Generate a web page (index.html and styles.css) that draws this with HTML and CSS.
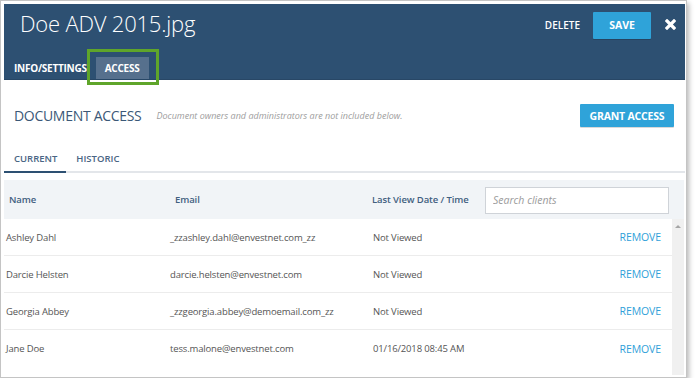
FILE: index.html
```html
<!DOCTYPE html>
<html lang="en">
<head>
<meta charset="utf-8">
<title>Doe ADV 2015.jpg</title>
<link rel="stylesheet" href="styles.css">
</head>
<body>
<div class="frame">
  <div class="modal">
    <header class="hdr">
      <div class="hdr-top">
        <h1 class="title">Doe ADV 2015.jpg</h1>
        <div class="actions">
          <span class="delete">DELETE</span>
          <button class="btn save">SAVE</button>
          <svg class="close" width="11" height="11" viewBox="0 0 11 11" aria-label="Close">
            <path d="M2 2 L9 9 M9 2 L2 9" stroke="#fff" stroke-width="3.2" stroke-linecap="square" fill="none"/>
          </svg>
        </div>
      </div>
      <nav class="hdr-tabs">
        <span class="htab">INFO/SETTINGS</span>
        <span class="htab active">ACCESS<span class="callout"></span></span>
      </nav>
    </header>

    <section class="access">
      <div class="access-head">
        <h2 class="sec-title">DOCUMENT ACCESS</h2>
        <span class="note">Document owners and administrators are not included below.</span>
        <button class="btn grant">GRANT ACCESS</button>
      </div>

      <div class="subtabs">
        <span class="stab current">CURRENT</span>
        <span class="stab">HISTORIC</span>
      </div>

      <div class="table">
        <div class="thead">
          <span class="th th-name">Name</span>
          <span class="th th-email">Email</span>
          <span class="th th-date">Last View Date / Time</span>
          <input class="search" type="text" placeholder="Search clients">
        </div>
        <div class="tbody-wrap">
          <div class="rows">
            <div class="row"><span>Ashley Dahl</span><span>_zzashley.dahl@envestnet.com_zz</span><span>Not Viewed</span><a class="remove">REMOVE</a></div>
            <div class="row"><span>Darcie Helsten</span><span>darcie.helsten@envestnet.com</span><span>Not Viewed</span><a class="remove">REMOVE</a></div>
            <div class="row"><span>Georgia Abbey</span><span>_zzgeorgia.abbey@demoemail.com_zz</span><span>Not Viewed</span><a class="remove">REMOVE</a></div>
            <div class="row"><span>Jane Doe</span><span>tess.malone@envestnet.com</span><span>01/16/2018 08:45 AM</span><a class="remove">REMOVE</a></div>
          </div>
          <div class="scrollbar"><span class="arrow"></span></div>
        </div>
      </div>
    </section>
  </div>
</div>
</body>
</html>
```

FILE: styles.css
```css
* { box-sizing: border-box; }

html, body {
  margin: 0;
  padding: 0;
  background: #ffffff;
}

body {
  font-family: "Open Sans", "Noto Sans", "Liberation Sans", sans-serif;
  color: #555;
}

.frame {
  width: 687px;
  height: 378px;
  border: 1px solid #c4c4c4;
  padding: 3px 1px 0 3px;
  box-shadow: 2px 3px 5px rgba(0, 0, 0, 0.28);
  background: #fff;
}

.modal {
  height: 100%;
  display: flex;
  flex-direction: column;
  overflow: hidden;
}

/* ---------- header ---------- */
.hdr {
  height: 76px;
  background: #2d5072;
  display: flex;
  flex-direction: column;
  justify-content: space-between;
  border-bottom: 1px solid #284766;
}

.hdr-top {
  height: 37px;
  display: flex;
  align-items: center;
  justify-content: space-between;
  padding: 5px 9px 0 16px;
}

.title {
  margin: 0;
  font-weight: 300;
  font-size: 22px;
  color: #fff;
  letter-spacing: -0.2px;
  line-height: 26px;
  margin-top: -4px;
}

.actions {
  display: flex;
  align-items: center;
}

.delete {
  color: #fff;
  font-size: 10px;
  font-weight: 600;
  margin-right: 13px;
}

.btn {
  border: 0;
  font-family: inherit;
  color: #fff;
  font-weight: 700;
  background: #2fa3d9;
  border-radius: 1px;
  padding: 0;
  box-shadow: 0 1px 0 rgba(0, 0, 0, 0.15);
}

.save {
  width: 58px;
  height: 27px;
  font-size: 10.5px;
  margin-right: 14px;
}

.close {
  display: block;
  margin-top: -2px;
}

.hdr-tabs {
  display: flex;
  padding-left: 1px;
  height: 22px;
}

.htab {
  position: relative;
  color: #fff;
  font-size: 10px;
  font-weight: 700;
  line-height: 22px;
  padding: 0 9px;
  letter-spacing: -0.25px;
}

.htab.active {
  background: #56708d;
  padding: 0 10px 0 9px;
}

.callout {
  position: absolute;
  left: -9px;
  top: -8px;
  width: 72px;
  height: 36px;
  border: 3px solid #5fa52a;
}

/* ---------- access section ---------- */
.access {
  flex: 1;
  display: flex;
  flex-direction: column;
  padding-top: 24px;
}

.access-head {
  display: flex;
  align-items: center;
  height: 23px;
  padding: 0 11px 0 10px;
}

.sec-title {
  margin: 0;
  font-size: 14px;
  font-weight: 400;
  color: #3b5877;
  letter-spacing: -0.3px;
}

.note {
  margin-left: 15px;
  font-size: 9px;
  font-style: italic;
  color: #9d9d9d;
}

.grant {
  margin-left: auto;
  width: 94px;
  height: 23px;
  font-size: 10.5px;
  letter-spacing: -0.2px;
}

.subtabs {
  display: flex;
  margin-top: 20px;
  height: 26px;
  border-bottom: 2px solid #e3e6ea;
}

.stab {
  font-size: 9.5px;
  font-weight: 600;
  color: #4a6584;
  line-height: 24px;
  padding: 0 9px 0 10px;
}

.stab.current {
  border-bottom: 2px solid #2d5072;
  margin-bottom: -2px;
  height: 26px;
}

/* ---------- table ---------- */
.table {
  margin-top: 7px;
  flex: 1;
  display: flex;
  flex-direction: column;
}

.thead {
  height: 39px;
  background: #f1f4f7;
  display: grid;
  grid-template-columns: 166px 197px 113px 184px;
  align-items: center;
  padding-left: 5px;
  margin-right: 1px;
}

.th {
  font-size: 9.5px;
  font-weight: 600;
  color: #41607f;
  letter-spacing: -0.1px;
}

.search {
  height: 27px;
  width: 184px;
  border: 1px solid #cfd3d8;
  background: #fff;
  font-family: inherit;
  font-size: 10.5px;
  font-style: italic;
  padding: 0 7px;
  margin-top: 1px;
}

.search::placeholder {
  color: #9b9b9b;
}

.tbody-wrap {
  flex: 1;
  display: flex;
}

.rows {
  flex: 1;
}

.row {
  height: 37px;
  display: grid;
  grid-template-columns: 164px 203px 1fr auto;
  align-items: center;
  padding: 0 11px 0 2px;
  border-bottom: 1px solid #ececec;
  font-size: 9.5px;
  letter-spacing: -0.15px;
  color: #555;
}

.row:last-child {
  border-bottom: 0;
}

.remove {
  color: #2f9fd9;
  font-size: 10.5px;
  letter-spacing: -0.1px;
}

.scrollbar {
  width: 12px;
  background: #f0f0f0;
  position: relative;
  margin-bottom: 2px;
  margin-right: 1px;
}

.arrow {
  position: absolute;
  left: 3px;
  top: 6px;
  width: 0;
  height: 0;
  border-left: 3px solid transparent;
  border-right: 3px solid transparent;
  border-bottom: 3px solid #a5a5a5;
}
```
